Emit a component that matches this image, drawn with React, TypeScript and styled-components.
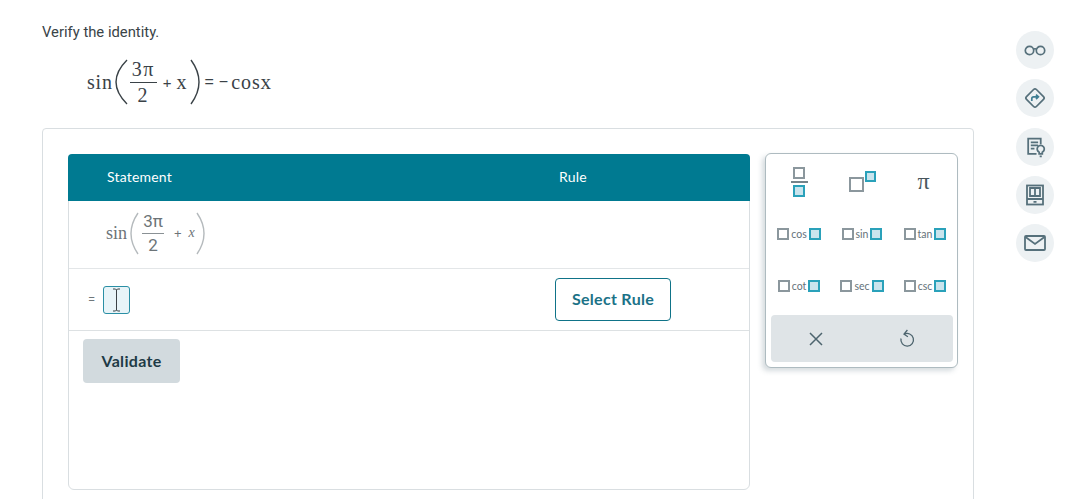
import React from "react";
import styled, { createGlobalStyle } from "styled-components";

const Global = createGlobalStyle`
  html, body { margin: 0; padding: 0; background: #fff; }
  body { width: 1080px; height: 499px; overflow: hidden; font-family: Roboto, "Liberation Sans", sans-serif; }
  * { box-sizing: border-box; }
`;

const Page = styled.div`
  width: 1080px; height: 499px; overflow: hidden; display: flex; align-items: flex-start;
`;
const Main = styled.main`
  width: 932px; margin-left: 42px; flex: none; display: flex; flex-direction: column;
`;
const Prompt = styled.div`
  font: 14.8px/18px Roboto, sans-serif; color: #3a4448; margin-top: 23px; height: 18px;
`;
const Equation = styled.div`
  display: flex; align-items: center; height: 66px; margin-top: 8px; margin-left: 45px;
  font-family: "Liberation Serif", serif; font-size: 20px; color: #3a4247;
`;
const Fn = styled.span`
  font-family: "Liberation Serif", serif; font-size: ${p => p.$size}px; letter-spacing: ${p => p.$spacing ?? 0}px;
  margin-right: ${p => p.$after ?? 0}px;
`;
const Var = styled.i`
  font-family: "Liberation Serif", serif; font-style: ${p => p.$upright ? "normal" : "italic"}; font-size: ${p => p.$size}px;
  margin: ${p => p.$m ?? 0};
`;
const Frac = styled.span`
  display: inline-flex; flex-direction: column; align-items: center; flex: none; width: ${p => p.$w}px; margin: 0 ${p => p.$gap}px;
  line-height: ${p => p.$lh}px; font-size: ${p => p.$size}px; letter-spacing: ${p => p.$spacing}px;
`;
const Num = styled.span`
  width: 100%; text-align: center; border-bottom: 1px solid ${p => p.$rule}; padding-bottom: 2px;
`;
const Den = styled.span`
  padding-top: 1px;
`;
const Op = styled.span`
  font-family: "Liberation Sans", sans-serif; font-size: ${p => p.$size}px; margin: ${p => p.$m};
`;
const ParenSvg = styled.svg`
  flex: none; display: block; fill: none; stroke: ${p => p.$color}; stroke-width: 1.4; margin: ${p => p.$m};
`;
const Paren = ({ right, w, h, color, m }: { right?: boolean; w: number; h: number; color: string; m: string }) => (
  <ParenSvg $color={color} $m={m} width={w} height={h} viewBox={`0 0 ${w} ${h}`}>
    <path d={right ? `M1 1 Q${2 * w - 3} ${h / 2} 1 ${h - 1}` : `M${w - 1} 1 Q${3 - w} ${h / 2} ${w - 1} ${h - 1}`} />
  </ParenSvg>
);

const Card = styled.section`
  margin-top: 13px; width: 932px; height: 420px; flex: none; border: 1px solid #d9dee1; border-radius: 4px;
  padding: 25px 15px 0 25px; display: flex; gap: 15px; align-items: flex-start;
`;
const Table = styled.div`
  width: 682px; height: 336px; flex: none; border: 1px solid #d9dee1; border-radius: 6px; display: flex; flex-direction: column;
`;
const Head = styled.div`
  height: 47px; margin: -1px -1px 0; background: #007a91; border-radius: 4px 4px 0 0; display: grid; grid-template-columns: 491px 1fr;
  align-items: center; color: #fff; font: 14px Lato, sans-serif; letter-spacing: 0.2px; padding-bottom: 2px;
`;
const HeadCell = styled.div`
  padding-left: ${p => p.$pad}px;
`;
const FirstRow = styled.div`
  height: 68px; border-bottom: 1px solid #e3e6e8; display: flex; align-items: center; padding: 0 0 3px 37px; color: #6c7478;
`;
const SecondRow = styled.div`
  height: 62px; border-bottom: 1px solid #dde1e3; display: flex; align-items: center; position: relative;
`;
const Equals = styled.span`
  font: 13px Roboto, sans-serif; color: #6f777b; margin-left: 19px; margin-right: 8px;
`;
const Input = styled.span`
  width: 27px; height: 28px; border: 1px solid #2a8fa5; border-radius: 3px; background: #e8f4f8; display: flex; align-items: center; justify-content: center;
`;
const RuleButton = styled.button`
  position: absolute; left: 486px; top: 9px; width: 116px; height: 43px; background: #fff; border: 1px solid #0f7388; border-radius: 4px;
  color: #1b7287; font: 700 16px Lato, sans-serif; letter-spacing: 0.3px; padding: 0 0 2px;
`;
const Validate = styled.button`
  margin: 8px 0 0 14px; width: 97px; height: 44px; border: 0; border-radius: 4px; background: #d2dade; color: #1e3a46;
  font: 700 16px Lato, sans-serif; letter-spacing: 0.3px; padding: 0 0 2px;
`;

const Keypad = styled.div`
  width: 193px; height: 215px; flex: none; margin-top: -1px; border: 1px solid #aebbc0; border-radius: 6px; background: #fff;
  box-shadow: -3px 3px 5px rgba(120,140,150,.3); padding: 0 4px 5px 5px; display: flex; flex-direction: column;
`;
const KeyGrid = styled.div`
  display: grid; grid-template-columns: 56px 70px 56px; grid-template-rows: 55px 49px 55px; padding-bottom: 2px; flex: none;
`;
const Key = styled.div`
  display: flex; align-items: center; justify-content: center; gap: 2px; font: 10.5px Lato, sans-serif; color: #65727a;
`;
const Box = styled.span`
  flex: none; display: block; width: ${p => p.$s}px; height: ${p => p.$s}px;
  border: 2px solid ${p => p.$on ? "#2aa1ba" : "#8b979d"};
  background: ${p => p.$on ? "#c9e4ed" : "#fff"};
`;
const Stack = styled.div`
  display: flex; flex-direction: column; align-items: center; gap: 2px;
`;
const Bar = styled.span`
  display: block; width: 17px; height: 2px; background: #75838a;
`;
const Pow = styled.div`
  display: flex; align-items: flex-start; padding-top: 6px; gap: 1px;
`;
const Sup = styled.div`
  margin-top: -6px;
`;
const Pi = styled.span`
  font: 24px "Liberation Serif", serif; color: #48565d; margin-left: -3px;
`;
const Actions = styled.div`
  height: 47px; flex: none; border-radius: 4px; background: #dfe4e7; display: grid; grid-template-columns: 90px 92px; justify-items: center; align-items: center;
`;

const Rail = styled.aside`
  margin-left: 42px; margin-top: 31px; display: flex; flex-direction: column; gap: 10px; flex: none;
  & > :nth-child(3) { margin-top: 1px; }
`;
const Round = styled.div`
  width: 38px; height: 38px; border-radius: 50%; background: #edf1f3; display: flex; align-items: center; justify-content: center;
`;
const Glyph = styled.svg`
  fill: none; stroke: ${p => p.$c ?? "#56707b"}; stroke-width: ${p => p.$w ?? 1.7}; display: block;
`;

const Math1 = () => (
  <Equation>
    <Fn $size={20} $spacing={0.8} $after={1}>sin</Fn>
    <Paren w={13} h={46} color="#3a4247" m="0 2px 0 1px" />
    <Frac $w={27} $gap={0} $lh={22} $size={20} $spacing={1.5}>
      <Num $rule="#3a4247">3π</Num>
      <Den>2</Den>
    </Frac>
    <Op $size={15} $m="0 5px 0 6px">+</Op>
    <Var $upright $size={20} $m="0 2px 0 0">x</Var>
    <Paren right w={10} h={46} color="#3a4247" m="0 5px 0 1px" />
    <Op $size={16} $m="0 5px 0 0">=</Op>
    <Op $size={16} $m="0 3px 0 0">−</Op>
    <Fn $size={20} $spacing={0.9}>cos</Fn>
    <Var $upright $size={21}>x</Var>
  </Equation>
);

const Math2 = () => (
  <>
    <Fn $size={18} $after={2}>sin</Fn>
    <Paren w={9} h={43} color="#b5babd" m="0 3px 0 1px" />
    <Frac $w={22} $gap={0} $lh={20} $size={17} $spacing={0}>
      <Num $rule="#8a9195">3π</Num>
      <Den>2</Den>
    </Frac>
    <Op $size={13} $m="0 7px 0 10px">+</Op>
    <Var $size={14}>x</Var>
    <Paren right w={9} h={43} color="#b5babd" m="0 0 0 1px" />
  </>
);

const TrigKey = ({ name }: { name: string }) => (
  <Key><Box $s={12} />{name}<Box $s={12} $on /></Key>
);

export default function App() {
  return (
    <Page>
      <Global />
      <Main>
        <Prompt>Verify the identity.</Prompt>
        <Math1 />
        <Card>
          <Table>
            <Head>
              <HeadCell $pad={39}>Statement</HeadCell>
              <HeadCell $pad={0}>Rule</HeadCell>
            </Head>
            <FirstRow><Math2 /></FirstRow>
            <SecondRow>
              <Equals>=</Equals>
              <Input>
                <Glyph width={9} height={24} viewBox="0 0 9 24" $c="#3b4246" $w={1}>
                  <path d="M1 1h2.5l1 1 1-1H8M4.5 2v20M1 23h2.5l1-1 1 1H8" />
                </Glyph>
              </Input>
              <RuleButton>Select Rule</RuleButton>
            </SecondRow>
            <Validate>Validate</Validate>
          </Table>
          <Keypad>
            <KeyGrid>
              <Key>
                <Stack><Box $s={12} /><Bar /><Box $s={12} $on /></Stack>
              </Key>
              <Key>
                <Pow><Box $s={15} /><Sup><Box $s={11} $on /></Sup></Pow>
              </Key>
              <Key><Pi>π</Pi></Key>
              <TrigKey name="cos" />
              <TrigKey name="sin" />
              <TrigKey name="tan" />
              <TrigKey name="cot" />
              <TrigKey name="sec" />
              <TrigKey name="csc" />
            </KeyGrid>
            <Actions>
              <Glyph width={14} height={14} viewBox="0 0 14 14" $c="#4d646e" $w={1.5}>
                <path d="M1 1l12 12M13 1L1 13" />
              </Glyph>
              <Glyph width={16} height={19} viewBox="0 0 16 19" $c="#4d646e" $w={1.3}>
                <path d="M5.2 5.2A6.3 6.3 0 1 1 2 9.5M8.4 1L5 5.2l3.9 2.6" />
              </Glyph>
            </Actions>
          </Keypad>
        </Card>
      </Main>
      <Rail>
        <Round>
          <Glyph width={22} height={11} viewBox="0 0 22 11">
            <circle cx="5.5" cy="5.5" r="4.2" /><circle cx="16.5" cy="5.5" r="4.2" /><path d="M9.5 4.2c1.6-.8 1.4-.8 3 0" />
          </Glyph>
        </Round>
        <Round>
          <Glyph width={24} height={24} viewBox="0 0 24 24">
            <rect x="5" y="5" width="14" height="14" rx="2" transform="rotate(45 12 12)" />
            <path d="M8.8 15v-2.4c0-1.1.7-1.8 1.8-1.8H15M13 8.6l2.4 2.2-2.4 2.2" stroke="#3f7d92" />
          </Glyph>
        </Round>
        <Round>
          <Glyph width={23} height={23} viewBox="0 0 22 22">
            <path d="M12 17H4V2.5h12V8" /><path d="M6.5 6h7M6.5 9h7M6.5 12h3.5" />
            <path d="M14.5 15.5a3.4 3.4 0 1 1 3 0V17h-3zM15 19.5h2" />
          </Glyph>
        </Round>
        <Round>
          <Glyph width={20} height={22} viewBox="0 0 20 22" $w={1.8}>
            <rect x="2" y="1.5" width="16" height="19" /><path d="M2 15h16M10 3.5v9M5 4h10v8H5zM8.5 17.8h3" />
          </Glyph>
        </Round>
        <Round>
          <Glyph width={22} height={16} viewBox="0 0 22 16" $w={1.8}>
            <rect x="1" y="1" width="20" height="14" rx="1" /><path d="M1.5 2l9.5 7 9.5-7" />
          </Glyph>
        </Round>
      </Rail>
    </Page>
  );
}
